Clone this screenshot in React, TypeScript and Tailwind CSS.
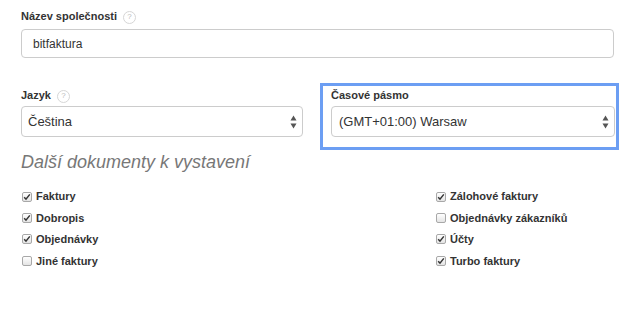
import React from 'react';

const Help = () => (
    <span className="ml-[6px] w-[13px] h-[13px] rounded-full border border-[#d6d6d6] flex items-center justify-center text-[8px] leading-none text-[#bbb] font-normal translate-y-[1px]">
        ?
    </span>
);

const Arrows = () => (
    <svg width="7" height="14" viewBox="0 0 7 14" className="shrink-0">
        <path d="M3.5 0.5 L6.5 5.5 L0.5 5.5 Z" fill="#555" />
        <path d="M3.5 13.5 L6.5 8.5 L0.5 8.5 Z" fill="#555" />
    </svg>
);

const Select = ({ value, width, pl }: { value: string; width: string; pl: string }) => (
    <div className={`${width} ${pl} h-[31px] pr-[5px] border border-[#cccccc] rounded-[4px] bg-white flex items-center justify-between text-[13px] text-[#333]`}>
        <span>{value}</span>
        <Arrows />
    </div>
);

const Check = ({ label, checked }: { label: string; checked: boolean }) => (
    <div className="h-[21.4px] flex items-center">
        <span className="ml-[1px] w-[10px] h-[10px] rounded-[2px] border border-[#a8a8a8] bg-gradient-to-b from-white to-[#e4e4e4] flex items-center justify-center">
            {checked && (
                <svg width="8" height="8" viewBox="0 0 8 8">
                    <path d="M1.2 4.2 L3 6.2 L6.8 1.4" stroke="#333" strokeWidth="1.5" fill="none" />
                </svg>
            )}
        </span>
        <span className="ml-[4px] text-[11px] font-bold text-[#333]">{label}</span>
    </div>
);

const left = [
    { label: 'Faktury', checked: true },
    { label: 'Dobropis', checked: true },
    { label: 'Objednávky', checked: true },
    { label: 'Jiné faktury', checked: false },
];

const right = [
    { label: 'Zálohové faktury', checked: true },
    { label: 'Objednávky zákazníků', checked: false },
    { label: 'Účty', checked: true },
    { label: 'Turbo faktury', checked: true },
];

export default function App() {
    return (
        <div className="w-[628px] h-[313px] bg-white pl-[21px] pt-[10px] font-['Liberation_Sans',Arial,sans-serif] text-[#333] overflow-hidden">
            {/* Company name */}
            <div className="flex items-center h-[12px] text-[11px] font-bold leading-[12px]">
                Název společnosti
                <Help />
            </div>
            <div className="mt-[7px] w-[593px] h-[29px] border border-[#cccccc] rounded-[4px] px-[11px] flex items-center text-[12px]">
                bitfaktura
            </div>

            {/* Language + timezone */}
            <div className="mt-[25px] flex">
                <div className="w-[282px] pt-[6px]">
                    <div className="flex items-center h-[12px] text-[11px] font-bold leading-[12px]">
                        Jazyk
                        <Help />
                    </div>
                    <div className="mt-[5px]">
                        <Select value="Čeština" width="w-[282px]" pl="pl-[6px]" />
                    </div>
                </div>
                <div className="ml-[17px] w-[299px] border-[3px] border-[#6c9ef3] pl-[8px] pt-[3px] pb-[10px]">
                    <div className="h-[12px] text-[11px] font-bold leading-[12px]">Časové pásmo</div>
                    <div className="mt-[5px]">
                        <Select value="(GMT+01:00) Warsaw" width="w-[284px]" pl="pl-[7px]" />
                    </div>
                </div>
            </div>

            {/* Documents */}
            <div className="mt-[2px] text-[18px] leading-[20px] italic text-[#777]">Další dokumenty k vystavení</div>
            <div className="mt-[14px] flex">
                <div className="w-[414px]">
                    {left.map((c) => (
                        <Check key={c.label} {...c} />
                    ))}
                </div>
                <div>
                    {right.map((c) => (
                        <Check key={c.label} {...c} />
                    ))}
                </div>
            </div>
        </div>
    );
}
